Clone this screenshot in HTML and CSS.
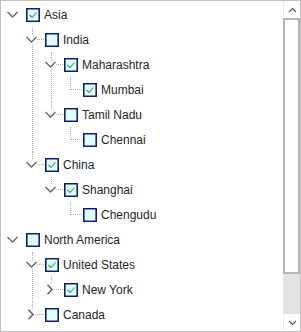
FILE: index.html
```html
<!DOCTYPE html>
<html>
  <head>
    <title>Regions</title>
    <link rel="stylesheet" href="styles.css">
  </head>
  <body>
    <div class="tree-view">
      <div class="tree">
        <ul class="nodes">
          <li class="node">
            <div class="row"><span class="toggle open"></span><span class="box checked"></span><span class="label">Asia</span></div>
            <ul class="children">
              <li class="node">
                <div class="row"><span class="toggle open"></span><span class="box"></span><span class="label">India</span></div>
                <ul class="children">
                  <li class="node">
                    <div class="row"><span class="toggle open"></span><span class="box checked"></span><span class="label">Maharashtra</span></div>
                    <ul class="children">
                      <li class="node">
                        <div class="row"><span class="toggle"></span><span class="box checked"></span><span class="label">Mumbai</span></div>
                      </li>
                    </ul>
                  </li>
                  <li class="node">
                    <div class="row"><span class="toggle open"></span><span class="box"></span><span class="label">Tamil Nadu</span></div>
                    <ul class="children">
                      <li class="node">
                        <div class="row"><span class="toggle"></span><span class="box"></span><span class="label">Chennai</span></div>
                      </li>
                    </ul>
                  </li>
                </ul>
              </li>
              <li class="node">
                <div class="row"><span class="toggle open"></span><span class="box checked"></span><span class="label">China</span></div>
                <ul class="children">
                  <li class="node">
                    <div class="row"><span class="toggle open"></span><span class="box checked"></span><span class="label">Shanghai</span></div>
                    <ul class="children">
                      <li class="node">
                        <div class="row"><span class="toggle"></span><span class="box"></span><span class="label">Chengudu</span></div>
                      </li>
                    </ul>
                  </li>
                </ul>
              </li>
            </ul>
          </li>
          <li class="node">
            <div class="row"><span class="toggle open"></span><span class="box"></span><span class="label">North America</span></div>
            <ul class="children">
              <li class="node">
                <div class="row"><span class="toggle open"></span><span class="box checked"></span><span class="label">United States</span></div>
                <ul class="children">
                  <li class="node">
                    <div class="row"><span class="toggle closed"></span><span class="box checked"></span><span class="label">New York</span></div>
                  </li>
                </ul>
              </li>
              <li class="node">
                <div class="row"><span class="toggle closed"></span><span class="box"></span><span class="label">Canada</span></div>
              </li>
            </ul>
          </li>
        </ul>
      </div>
      <div class="scrollbar">
        <div class="sb-button">
          <svg width="9" height="6" viewBox="0 0 9 6"><polyline points="1,5 4.5,1.5 8,5" fill="none" stroke="#4b5675" stroke-width="1.2"/></svg>
        </div>
        <div class="sb-thumb"></div>
        <div class="sb-track"></div>
        <div class="sb-button">
          <svg width="9" height="6" viewBox="0 0 9 6"><polyline points="1,1 4.5,4.5 8,1" fill="none" stroke="#4b5675" stroke-width="1.2"/></svg>
        </div>
      </div>
    </div>
    <script>
      var openIcon = '<svg width="11" height="9" viewBox="0 0 11 9"><rect width="11" height="9" fill="#fff"/><polyline points="0.5,2 5.5,7 10.5,2" fill="none" stroke="#6e6259" stroke-width="1.3"/></svg>';
      var closedIcon = '<svg width="8" height="11" viewBox="0 0 8 11"><rect width="8" height="11" fill="#fff"/><polyline points="1.5,0.8 6,5.5 1.5,10.2" fill="none" stroke="#6e6259" stroke-width="1.6"/></svg>';
      var checkIcon = '<svg width="10" height="10" viewBox="0 0 10 10"><polyline points="1.5,5 4,7.5 8.5,2.5" fill="none" stroke="#3c9e48" stroke-width="1.1"/></svg>';

      document.querySelectorAll(".toggle.open").forEach(function (el) { el.innerHTML = openIcon; });
      document.querySelectorAll(".toggle.closed").forEach(function (el) { el.innerHTML = closedIcon; });
      document.querySelectorAll(".box.checked").forEach(function (el) { el.innerHTML = checkIcon; });
    </script>
  </body>
</html>
```

FILE: styles.css
```css
body {
  margin: 0;
  font-family: "Liberation Sans", Arial, sans-serif;
  font-size: 12px;
  color: #262626;
  background-color: #fff;
}

.tree-view {
  width: 301px;
  height: 332px;
  box-sizing: border-box;
  border: 1px solid #c4c4c4;
  display: flex;
  background-color: #fff;
}

.tree {
  flex: 1;
  overflow: hidden;
  padding: 1px 0 0 1px;
}

ul {
  margin: 0;
  padding: 0;
  list-style: none;
}

.node {
  position: relative;
}

.children {
  margin-left: 19px;
}

/* vertical connector from the parent checkbox down to each child */
.children > .node::before {
  content: "";
  position: absolute;
  left: 11px;
  top: 0;
  bottom: 0;
  border-left: 1px dotted #acacac;
}

.children > .node:last-child::before {
  bottom: auto;
  height: 13px;
}

.row {
  position: relative;
  height: 25px;
  display: flex;
  align-items: center;
  white-space: nowrap;
}

/* horizontal connector into the checkbox */
.children .row::before {
  content: "";
  position: absolute;
  left: 11px;
  top: 12px;
  width: 12px;
  border-top: 1px dotted #acacac;
}

.toggle {
  position: relative;
  z-index: 1;
  width: 20px;
  height: 25px;
  display: flex;
  align-items: center;
  justify-content: center;
}

.toggle svg {
  display: block;
}

.box {
  position: relative;
  z-index: 1;
  width: 14px;
  height: 14px;
  box-sizing: border-box;
  margin-left: 4px;
  border: 1px solid #101e7a;
  box-shadow: inset 0 0 0 0.6px #101e7a;
  background-color: #e0ffff;
  display: flex;
  align-items: center;
  justify-content: center;
}

.box svg {
  display: block;
}

.label {
  margin-left: 4px;
}

.scrollbar {
  width: 17px;
  display: flex;
  flex-direction: column;
}

.sb-button {
  height: 17px;
  box-sizing: border-box;
  border-left: 1px solid #ececec;
  background-color: #fff;
  display: flex;
  align-items: center;
  justify-content: center;
}

.sb-thumb {
  height: 256px;
  box-sizing: border-box;
  border: 2px solid #b5b5b5;
  background-color: #fff;
}

.sb-track {
  flex: 1;
  background-color: #e3e3e3;
}
```
